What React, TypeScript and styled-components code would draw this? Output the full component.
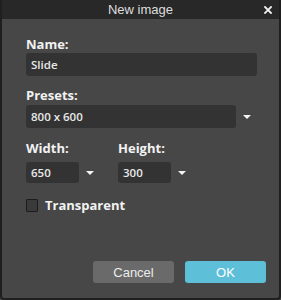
import React from "react";
import styled, { createGlobalStyle } from "styled-components";

const Global = createGlobalStyle`
  html, body { margin: 0; padding: 0; background: #474747; }
  body { width: 281px; height: 300px; overflow: hidden; }
`;

const Dialog = styled.div`
  box-sizing: border-box;
  width: 281px;
  height: 300px;
  display: flex;
  flex-direction: column;
  background: #474747;
  border-left: 2px solid #1f1f1f;
  border-right: 2px solid #1f1f1f;
  border-bottom: 2px solid #1f1f1f;
  border-radius: 0 0 4px 4px;
`;

const TitleBar = styled.div`
  position: relative;
  height: 19px;
  background: #282828;
  display: flex;
  align-items: center;
  justify-content: center;
  font-family: "Liberation Sans", Arial, sans-serif;
  font-size: 13px;
  color: #dedede;
`;

const Close = styled.span`
  position: absolute;
  right: 7px;
  top: 6px;
  width: 8px;
  height: 8px;
  display: flex;
`;

const Body = styled.div`
  flex: 1;
  display: flex;
  flex-direction: column;
  padding: 17px 22px 15px 24px;
  font-family: "Open Sans", sans-serif;
`;

const Label = styled.div<{ $top?: number; $gap?: number }>`
  font-size: 13px;
  line-height: 16px;
  font-weight: 700;
  color: #f2f2f2;
  margin-top: ${(p) => p.$top ?? 0}px;
  margin-bottom: ${(p) => p.$gap ?? 2}px;
`;

const Field = styled.div<{ $w?: number; $h?: number }>`
  box-sizing: border-box;
  width: ${(p) => (p.$w ? `${p.$w}px` : "100%")};
  height: ${(p) => p.$h ?? 22}px;
  background: #333333;
  border-radius: 3px;
  padding-left: 5px;
  display: flex;
  align-items: center;
  font-size: 11.5px;
  font-weight: 600;
  color: #e8e8e8;
`;

const SelectRow = styled.div`
  display: flex;
  align-items: center;
`;

const Arrow = styled.span<{ $ml: number }>`
  margin-left: ${(p) => p.$ml}px;
  width: 0;
  height: 0;
  border-left: 4px solid transparent;
  border-right: 4px solid transparent;
  border-top: 4px solid #f4f4f4;
`;

const SizeRow = styled.div`
  display: flex;
  gap: 24px;
`;

const Group = styled.div`
  display: flex;
  flex-direction: column;
  width: 68px;
`;

const CheckRow = styled.label`
  display: flex;
  align-items: center;
  gap: 7px;
  margin-top: 14px;
  font-size: 13px;
  line-height: 16px;
  font-weight: 700;
  color: #f2f2f2;
`;

const Box = styled.span`
  box-sizing: border-box;
  width: 12px;
  height: 13px;
  background: #3a3a3a;
  border: 1px solid #1c1c1c;
  border-radius: 1px;
`;

const Buttons = styled.div`
  margin-top: auto;
  margin-right: -9px;
  display: flex;
  justify-content: flex-end;
  gap: 11px;
`;

const Button = styled.button<{ $primary?: boolean }>`
  width: 81px;
  height: 22px;
  border: none;
  border-radius: 3px;
  padding: 0;
  font-family: "Liberation Sans", Arial, sans-serif;
  font-size: 13px;
  color: ${(p) => (p.$primary ? "#ffffff" : "#ececec")};
  background: ${(p) => (p.$primary ? "#5ebfd8" : "#6a6a6a")};
`;

export default function App() {
  return (
    <>
      <Global />
      <Dialog>
        <TitleBar>
          New image
          <Close>
            <svg width="8" height="8" viewBox="0 0 8 8">
              <path d="M1 1L7 7M7 1L1 7" stroke="#f0f0f0" strokeWidth="1.8" strokeLinecap="square" />
            </svg>
          </Close>
        </TitleBar>
        <Body>
          <Label $gap={1}>Name:</Label>
          <Field $h={23}>Slide</Field>
          <Label $top={11} $gap={2}>Presets:</Label>
          <SelectRow>
            <Field $w={210} $h={23}>800 x 600</Field>
            <Arrow $ml={7} />
          </SelectRow>
          <SizeRow>
            <Group>
              <Label $top={12} $gap={6}>Width:</Label>
              <SelectRow>
                <Field $w={54} $h={21}>650</Field>
                <Arrow $ml={7} />
              </SelectRow>
            </Group>
            <Group>
              <Label $top={12} $gap={6}>Height:</Label>
              <SelectRow>
                <Field $w={54} $h={21}>300</Field>
                <Arrow $ml={7} />
              </SelectRow>
            </Group>
          </SizeRow>
          <CheckRow>
            <Box />
            Transparent
          </CheckRow>
          <Buttons>
            <Button>Cancel</Button>
            <Button $primary>OK</Button>
          </Buttons>
        </Body>
      </Dialog>
    </>
  );
}
